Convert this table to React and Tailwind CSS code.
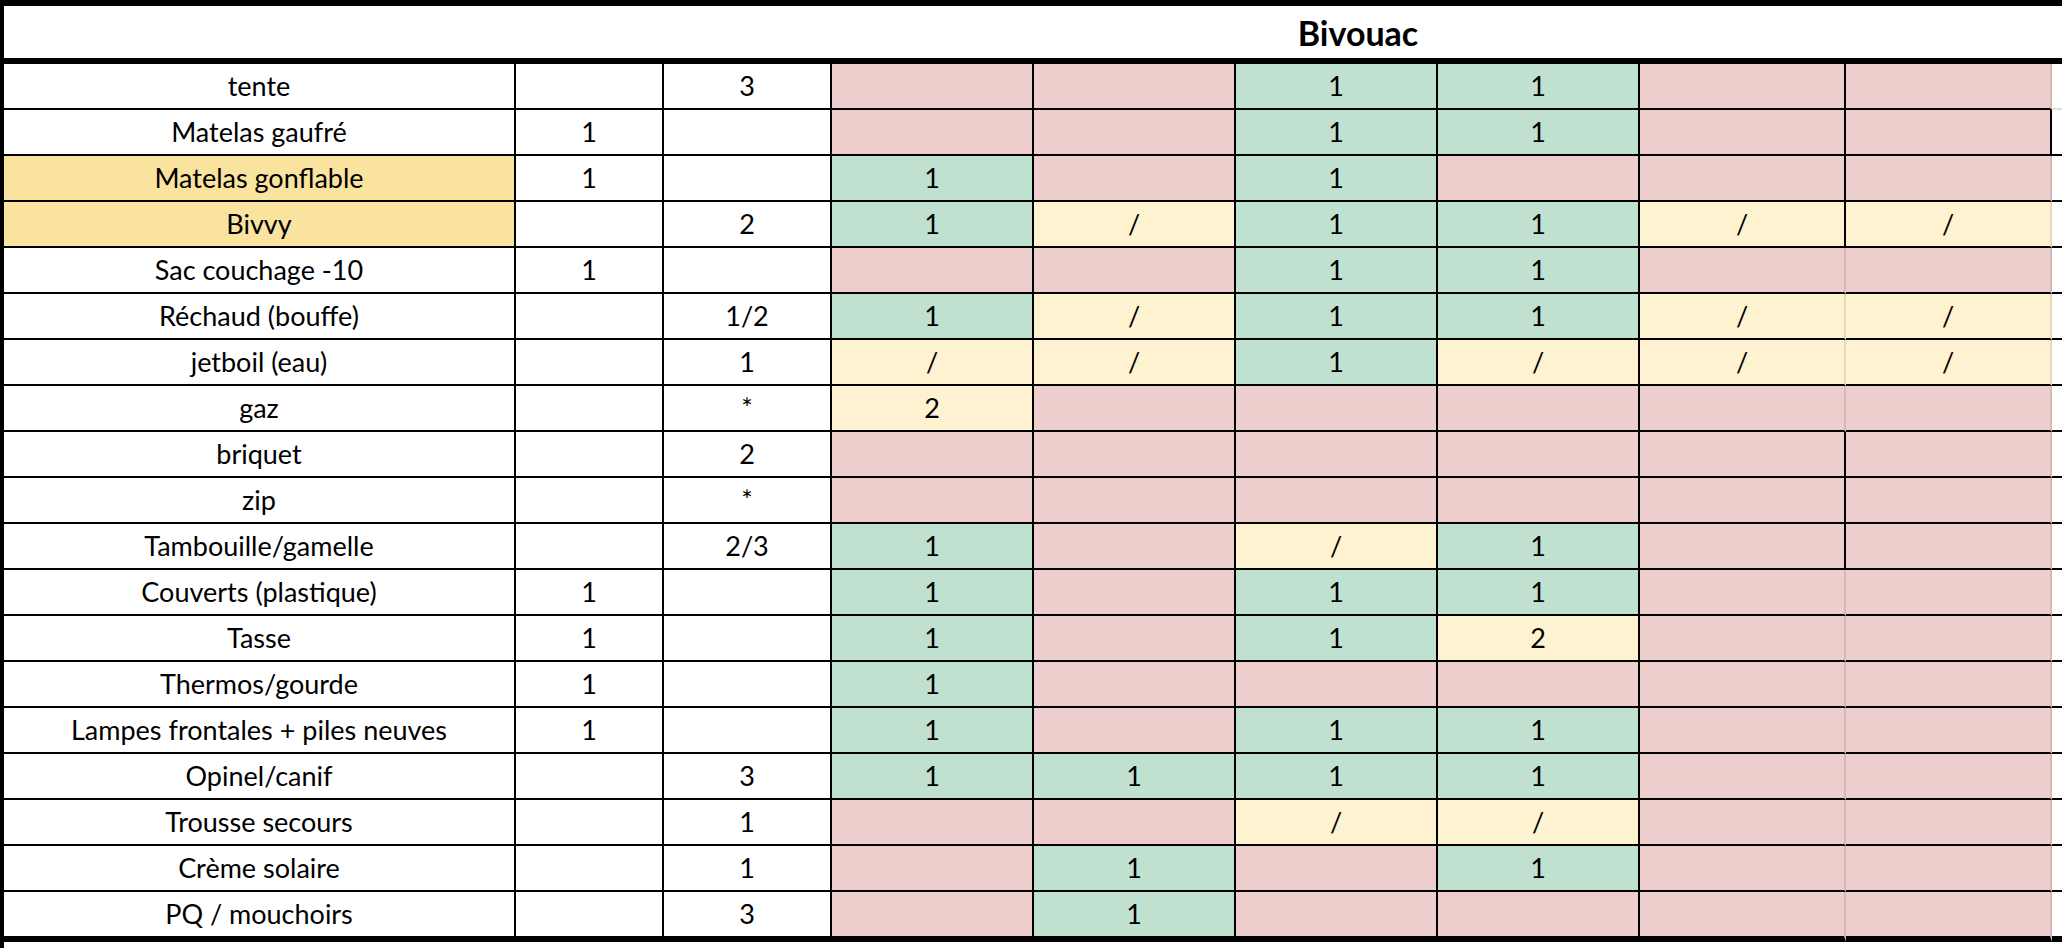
import React from 'react'

const PINK = 'bg-[#eecdcd]'
const GREEN = 'bg-[#c0e1d0]'
const YELLOW = 'bg-[#fef2d0]'

const rows = [
  { name: 'tente', a: '', b: '3', cells: ['P', 'P', 'G1', 'G1', 'P', 'P'], dark: true },
  { name: 'Matelas gaufré', a: '1', b: '', cells: ['P', 'P', 'G1', 'G1', 'P', 'P'], dark: true, edge: true },
  { name: 'Matelas gonflable', a: '1', b: '', cells: ['G1', 'P', 'G1', 'P', 'P', 'P'], dark: true, gold: true },
  { name: 'Bivvy', a: '', b: '2', cells: ['G1', 'Y/', 'G1', 'G1', 'Y/', 'Y/'], dark: true, gold: true },
  { name: 'Sac couchage -10', a: '1', b: '', cells: ['P', 'P', 'G1', 'G1', 'P', 'P'] },
  { name: 'Réchaud (bouffe)', a: '', b: '1/2', cells: ['G1', 'Y/', 'G1', 'G1', 'Y/', 'Y/'] },
  { name: 'jetboil (eau)', a: '', b: '1', cells: ['Y/', 'Y/', 'G1', 'Y/', 'Y/', 'Y/'] },
  { name: 'gaz', a: '', b: '*', cells: ['Y2', 'P', 'P', 'P', 'P', 'P'] },
  { name: 'briquet', a: '', b: '2', cells: ['P', 'P', 'P', 'P', 'P', 'P'], dark: true },
  { name: 'zip', a: '', b: '*', cells: ['P', 'P', 'P', 'P', 'P', 'P'], dark: true },
  { name: 'Tambouille/gamelle', a: '', b: '2/3', cells: ['G1', 'P', 'Y/', 'G1', 'P', 'P'], dark: true },
  { name: 'Couverts (plastique)', a: '1', b: '', cells: ['G1', 'P', 'G1', 'G1', 'P', 'P'] },
  { name: 'Tasse', a: '1', b: '', cells: ['G1', 'P', 'G1', 'Y2', 'P', 'P'] },
  { name: 'Thermos/gourde', a: '1', b: '', cells: ['G1', 'P', 'P', 'P', 'P', 'P'] },
  { name: 'Lampes frontales + piles neuves', a: '1', b: '', cells: ['G1', 'P', 'G1', 'G1', 'P', 'P'] },
  { name: 'Opinel/canif', a: '', b: '3', cells: ['G1', 'G1', 'G1', 'G1', 'P', 'P'] },
  { name: 'Trousse secours', a: '', b: '1', cells: ['P', 'P', 'Y/', 'Y/', 'P', 'P'] },
  { name: 'Crème solaire', a: '', b: '1', cells: ['P', 'G1', 'P', 'G1', 'P', 'P'] },
  { name: 'PQ / mouchoirs', a: '', b: '3', cells: ['P', 'G1', 'P', 'P', 'P', 'P'] },
]

function colorOf(code) {
  if (code[0] === 'G') return GREEN
  if (code[0] === 'Y') return YELLOW
  return PINK
}

function Row({ row, last, first }) {
  const bottom = last ? 'h-[50px] border-b-[6px]' : 'h-[46px] border-b-2'
  return (
    <div className="flex">
      <div className={`w-[512px] ${bottom} border-r-2 border-black flex items-center justify-center ${row.gold ? 'bg-[#fae39f]' : 'bg-white'}`}>
        {row.name}
      </div>
      <div className={`w-[148px] ${bottom} border-r-2 border-black flex items-center justify-center`}>{row.a}</div>
      <div className={`w-[168px] ${bottom} border-r-2 border-black flex items-center justify-center`}>{row.b}</div>
      {row.cells.map((c, i) => {
        let right = 'border-r-black'
        if (i === 4 && !row.dark) right = 'border-r-black/10'
        if (i === 5) right = row.edge ? 'border-r-black' : 'border-r-black/10'
        const w = i < 4 ? 'w-[202px]' : 'w-[206px]'
        return (
          <div key={i} className={`${w} ${bottom} border-r-2 border-b-black ${right} flex items-center justify-center ${colorOf(c)}`}>
            {c.slice(1)}
          </div>
        )
      })}
      <div className={`w-[10px] ${bottom} ${first ? 'border-[#dddddd]' : 'border-black'}`} />
    </div>
  )
}

export default function App() {
  return (
    <div className="w-[2062px] h-[948px] bg-white border-l-4 border-black text-black text-[27px] font-['Lato',sans-serif]">
      <div className="h-[64px] border-t-[6px] border-b-[6px] border-black flex">
        <div className="w-[660px]" />
        <div className="w-[1388px] flex items-center justify-center font-bold text-[34px]">Bivouac</div>
      </div>
      {rows.map((r, i) => (
        <Row key={r.name} row={r} first={i === 0} last={i === rows.length - 1} />
      ))}
    </div>
  )
}
